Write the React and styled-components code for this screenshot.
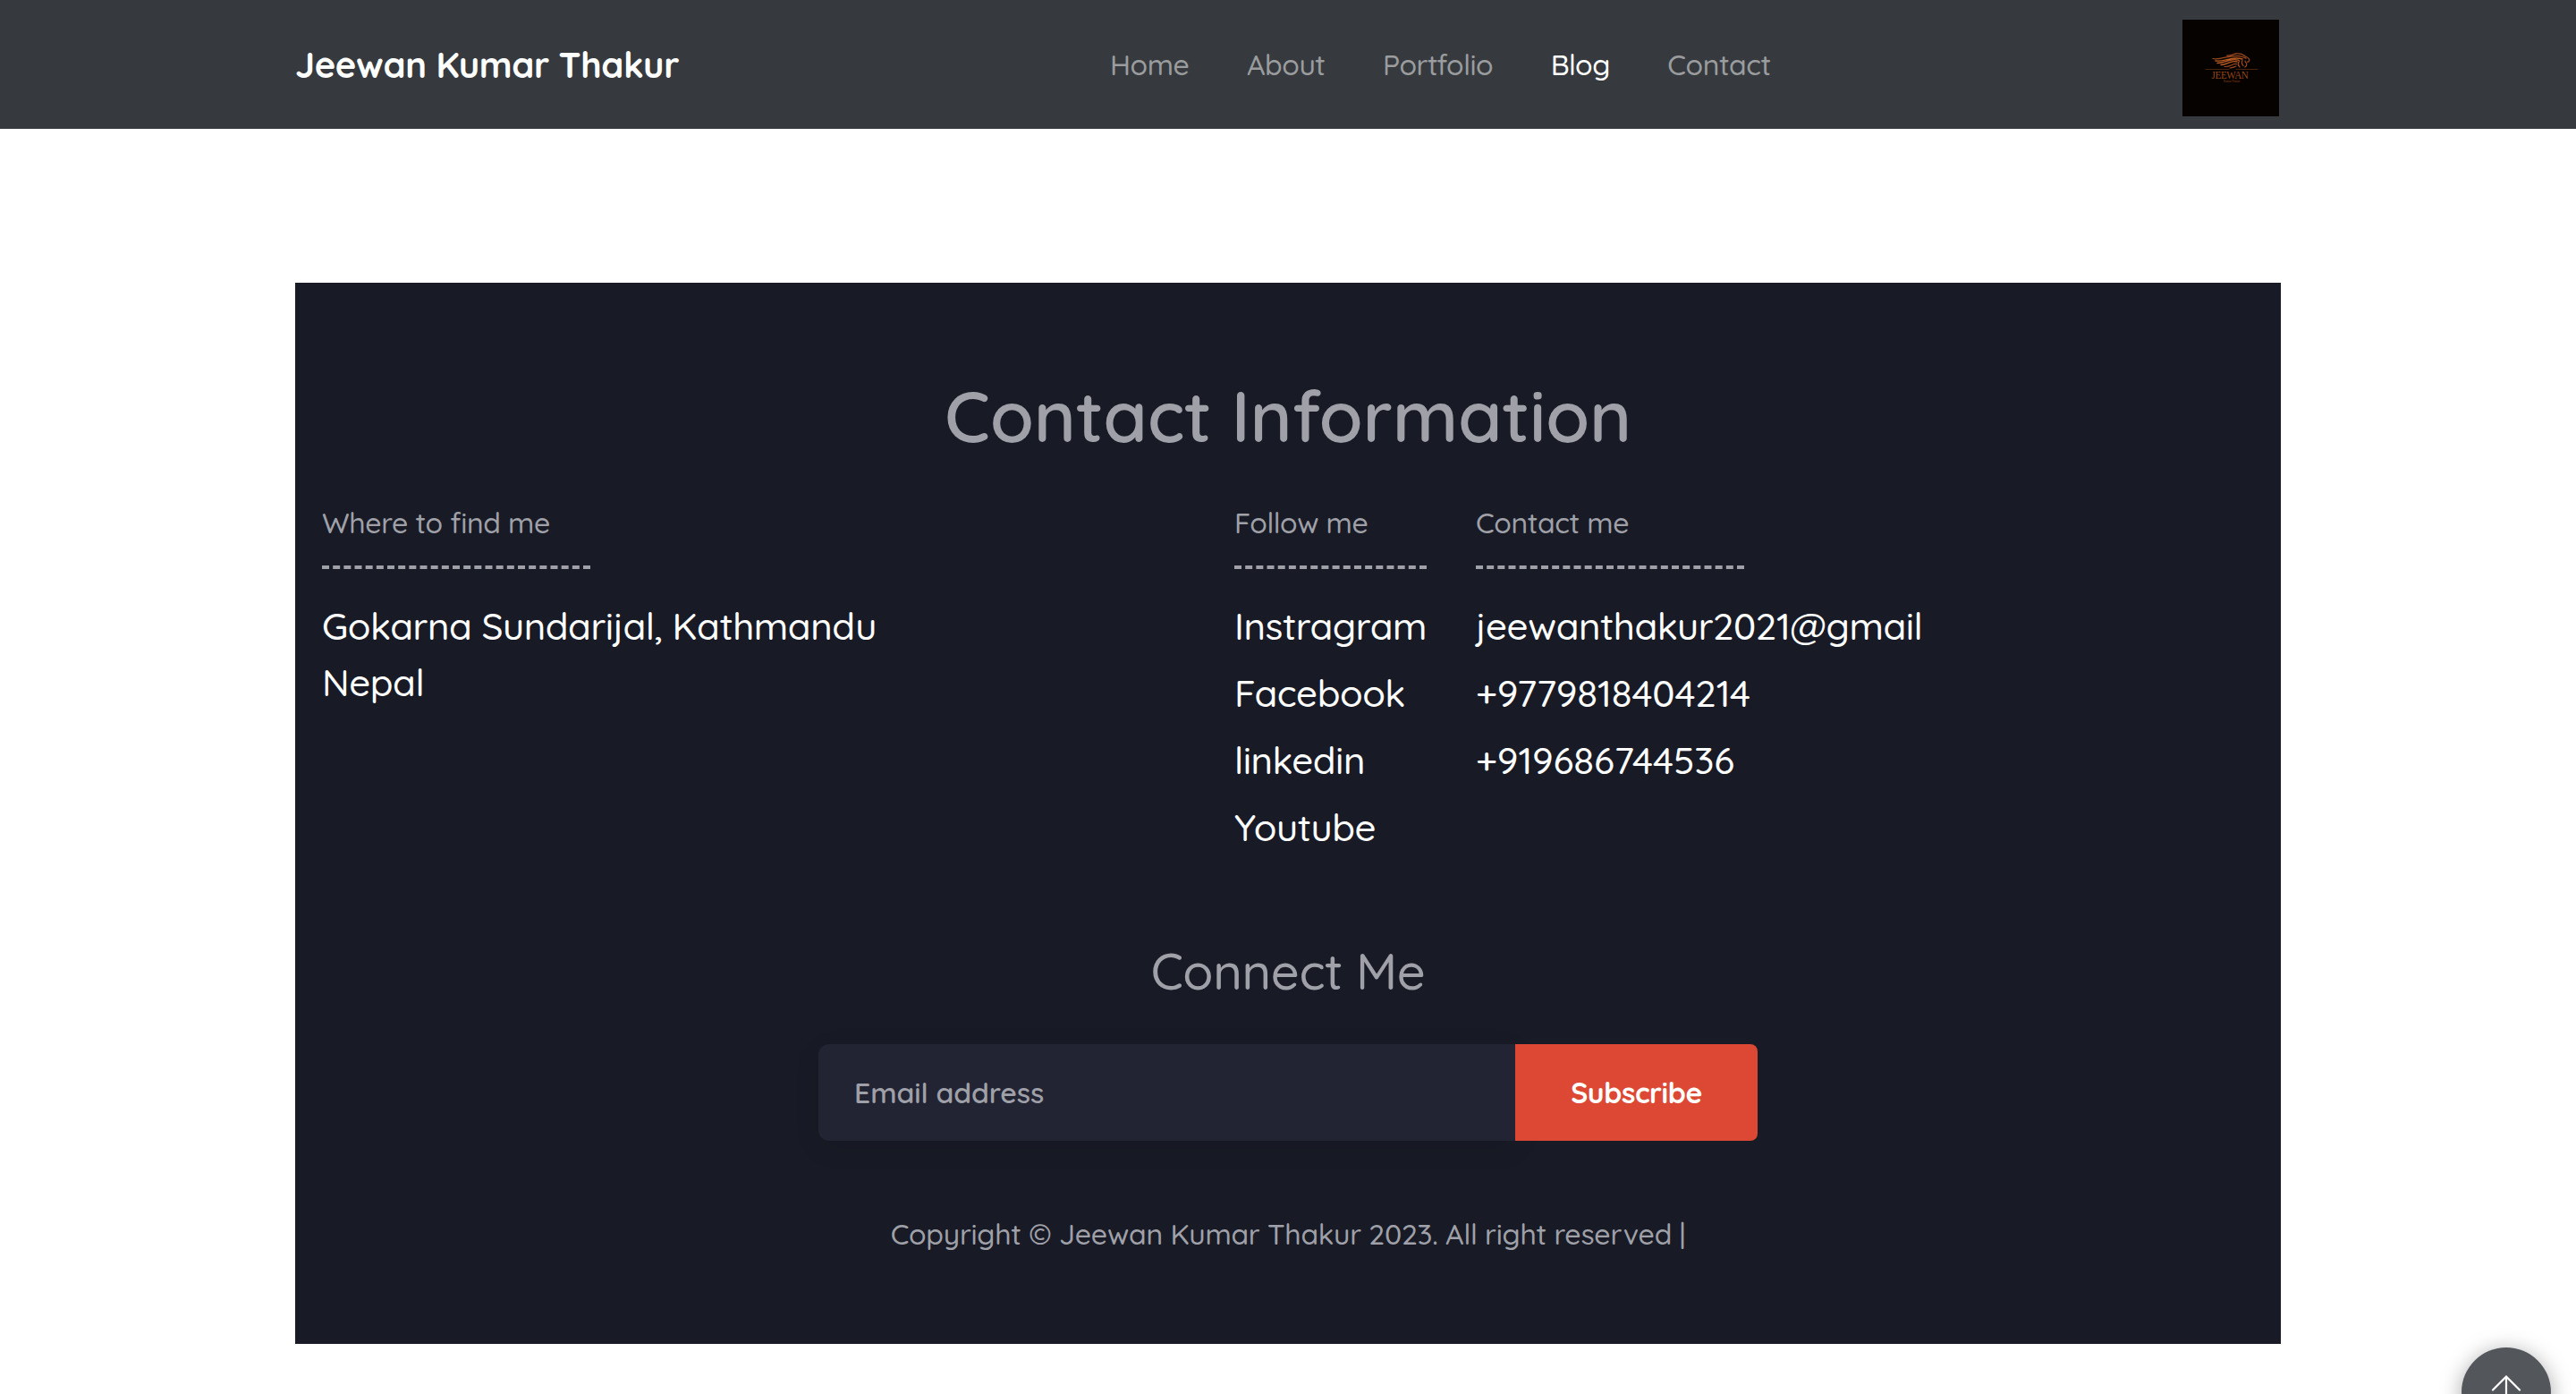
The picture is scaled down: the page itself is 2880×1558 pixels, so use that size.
import React from "react";
import styled, { createGlobalStyle } from "styled-components";

const GlobalStyle = createGlobalStyle`
  *, *::before, *::after { box-sizing: border-box; }
  body {
    margin: 0;
    background: #fff;
    font-family: Quicksand, Lato, sans-serif;
    font-size: 32px;
    font-weight: 500;
    line-height: 1.5;
    letter-spacing: -0.36px;
    overflow: hidden;
  }
  a { color: inherit; text-decoration: none; }
`;

const NavBar = styled.nav`
  display: flex;
  justify-content: center;
  height: 144px;
  background: #363a3e;
`;
const NavInner = styled.div`
  display: flex;
  align-items: center;
  width: 2220px;
  padding-right: 2px;
`;
const Brand = styled.a`
  width: 911px;
  font-size: 40px;
  font-weight: 700;
  letter-spacing: -0.42px;
  color: #fff;
`;
const NavList = styled.ul`
  display: flex;
  flex: 1;
  gap: 64.5px;
  margin: 0;
  padding: 0;
  list-style: none;
  letter-spacing: -0.45px;
`;
const NavLink = styled.a`
  color: ${(p) => (p.$active ? "#fff" : "#9a9c9e")};
`;
const Logo = styled.svg`
  width: 108px;
  height: 108px;
  margin-top: 8px;
  background: #050200;
`;

const Footer = styled.footer`
  display: flex;
  flex-direction: column;
  align-items: center;
  width: 2220px;
  height: 1186px;
  margin: 172px auto 0;
  padding: 100px 30px 0;
  background: #181a25;
  color: #9fa0a8;
`;
const Heading = styled.h2`
  margin: 0 0 48px;
  font-size: 80px;
  line-height: 96px;
  font-weight: 600;
  letter-spacing: -0.28px;
`;
const Columns = styled.div`
  display: grid;
  grid-template-columns: 1020px 270px 1fr;
  align-self: stretch;
`;
const Title = styled.p`
  margin: 0 0 24px;
`;
const Dashes = styled.hr`
  width: ${(p) => p.$width}px;
  height: 0;
  margin: 0 0 32px;
  border: 0;
  border-top: 4px dashed #9fa0a8;
`;
const Items = styled.div`
  display: flex;
  flex-direction: column;
  gap: ${(p) => p.$gap || 0}px;
  font-size: 42px;
  line-height: 63px;
  letter-spacing: -0.47px;
  color: #fff;
`;
const Phone = styled.a`
  letter-spacing: -0.1px;
`;
const Sub = styled.h3`
  margin: 96px 0 48px;
  font-size: 56px;
  line-height: 67px;
  font-weight: 500;
  letter-spacing: -0.42px;
`;
const Form = styled.form`
  display: flex;
  width: 1050px;
  height: 108px;
`;
const Email = styled.input`
  flex: 1;
  min-width: 0;
  padding: 0 40px;
  border: 0;
  border-radius: 12px 0 0 12px;
  background: #222433;
  box-shadow: 0 8px 30px rgba(0, 0, 0, 0.08);
  font: inherit;
  font-weight: 600;
  letter-spacing: -0.1px;
  color: #9fa0a8;
  &::placeholder { color: #9fa0a8; opacity: 1; }
`;
const Submit = styled.button`
  width: 271px;
  padding: 0;
  border: 0;
  border-radius: 0 8px 8px 0;
  background: #dc4833;
  color: #fff;
  font: inherit;
  font-weight: 700;
  letter-spacing: -0.42px;
`;
const Copy = styled.p`
  margin: 80px 0 0;
  letter-spacing: -0.24px;
`;
const ToTop = styled.a`
  position: fixed;
  right: 28px;
  bottom: -48px;
  display: flex;
  align-items: center;
  justify-content: center;
  width: 100px;
  height: 100px;
  border-radius: 50%;
  background: #53565b;
  box-shadow: 0 4px 24px rgba(0, 0, 0, 0.35);
`;

const links = ["Home", "About", "Portfolio", "Blog", "Contact"];
const social = ["Instragram", "Facebook", "linkedin", "Youtube"];
const phones = ["+9779818404214", "+919686744536"];

const LionLogo = () => (
  <Logo viewBox="0 0 108 108" aria-label="Jeewan">
    <g fill="none" stroke="#9c4a1c" strokeLinecap="round" strokeLinejoin="round">
      <path strokeWidth="1.3" d="M50 40c5 .5 6-1.500 10-2 4-.2 7 .6 9.500 2.300M34 43.500c4 1.200 9-.5 14-1.300 6-1 10-2 15-1.500 4 .5 6 1.500 8 2.500" />
      <path strokeWidth="1.4" stroke="#b85a24" d="M37 46c6 .8 11-1.200 17-2.400 5-.9 9-.9 13 .4M39 48.500c6 0 9-2 14-3.200 4-.9 7-.9 10 0M43 50.500c5 0 7-2 11-3.200 3-.9 5-.9 7-.3" />
      <path strokeWidth="1.2" d="M47 52.500c5 .3 7-1.600 10-2.800 2-.7 3-.5 4 0M53 54c3-.2 4-1 7-2" />
      <path strokeWidth="1.2" d="M69 40.500c3 1 5.500 2.500 5.800 4.500 0 1.500-1 2.300-2.200 2.200M64 46c-2 1.600-2 5 0 7M67 45.500c-1.200 2-.6 4 1 6M70 46c0 1.600 1.500 2 1.800 3.300.3 1.500-.6 2.800-2 3.700M62.500 47.500v4" />
      <path stroke="#5c2a0c" strokeWidth="0.8" d="M26 55.500h26M60 55.500h24" />
    </g>
    <text x="32.500" y="66" fontFamily="Liberation Serif, serif" fontSize="11.500" fontWeight="400" textLength="41" lengthAdjust="spacingAndGlyphs" fill="#964617">JEEWAN</text>
    <text x="46" y="70" fontFamily="Liberation Serif, serif" fontSize="3.200" fontWeight="400" textLength="18" fill="#8a4015">Kumar Thakur</text>
  </Logo>
);

export default function App() {
  return (
    <>
      <GlobalStyle />
      <NavBar>
        <NavInner>
          <Brand href="#">Jeewan Kumar Thakur</Brand>
          <NavList>
            {links.map((label) => (
              <li key={label}>
                <NavLink href="#" $active={label === "Blog"}>{label}</NavLink>
              </li>
            ))}
          </NavList>
          <LionLogo />
        </NavInner>
      </NavBar>
      <Footer>
        <Heading>Contact Information</Heading>
        <Columns>
          <div>
            <Title>Where to find me</Title>
            <Dashes $width={300} />
            <Items>
              <span>Gokarna Sundarijal, Kathmandu</span>
              <span>Nepal</span>
            </Items>
          </div>
          <div>
            <Title>Follow me</Title>
            <Dashes $width={215} />
            <Items $gap={12}>
              {social.map((name) => <a key={name} href="#">{name}</a>)}
            </Items>
          </div>
          <div>
            <Title>Contact me</Title>
            <Dashes $width={300} />
            <Items $gap={12}>
              <a href="#">jeewanthakur2021@gmail</a>
              {phones.map((n) => <Phone key={n} href="#">{n}</Phone>)}
            </Items>
          </div>
        </Columns>
        <Sub>Connect Me</Sub>
        <Form>
          <Email type="email" placeholder="Email address" />
          <Submit type="button">Subscribe</Submit>
        </Form>
        <Copy>Copyright © Jeewan Kumar Thakur 2023. All right reserved |</Copy>
      </Footer>
      <ToTop href="#" aria-label="Back to top">
        <svg width="36" height="38" viewBox="0 0 36 38" fill="none" stroke="#fff" strokeWidth="2.200" strokeLinecap="round">
          <path d="M18 37V1.500M3 16.500l15-15 15 15" />
        </svg>
      </ToTop>
    </>
  );
}
